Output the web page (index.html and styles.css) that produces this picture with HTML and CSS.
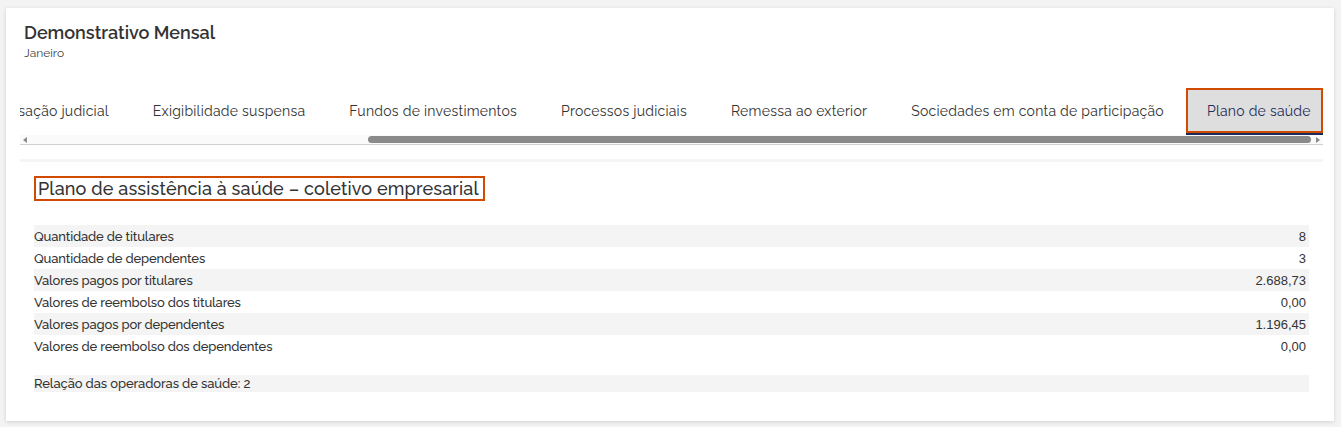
FILE: index.html
```html
<!DOCTYPE html>
<html lang="pt-BR">
<head>
<meta charset="utf-8">
<title>Demonstrativo Mensal</title>
<link rel="stylesheet" href="styles.css">
</head>
<body>
<div class="card">
  <header class="head">
    <h1 class="title">Demonstrativo Mensal</h1>
    <div class="subtitle">Janeiro</div>
  </header>

  <nav class="tabs">
    <div class="tabs-viewport">
      <ul class="tab-strip">
        <li class="tab">Compensação judicial</li>
        <li class="tab">Exigibilidade suspensa</li>
        <li class="tab">Fundos de investimentos</li>
        <li class="tab">Processos judiciais</li>
        <li class="tab">Remessa ao exterior</li>
        <li class="tab">Sociedades em conta de participação</li>
        <li class="tab tab-active">Plano de saúde</li>
      </ul>
    </div>
    <div class="scrollbar">
      <span class="arrow arrow-left"></span>
      <div class="track"><div class="thumb"></div></div>
      <span class="arrow arrow-right"></span>
    </div>
  </nav>

  <section class="panel">
    <h2 class="panel-title">Plano de assistência à saúde – coletivo empresarial</h2>
    <div class="rows">
      <div class="row"><span class="label">Quantidade de titulares</span><span class="value">8</span></div>
      <div class="row"><span class="label">Quantidade de dependentes</span><span class="value">3</span></div>
      <div class="row"><span class="label">Valores pagos por titulares</span><span class="value">2.688,73</span></div>
      <div class="row"><span class="label">Valores de reembolso dos titulares</span><span class="value">0,00</span></div>
      <div class="row"><span class="label">Valores pagos por dependentes</span><span class="value">1.196,45</span></div>
      <div class="row"><span class="label">Valores de reembolso dos dependentes</span><span class="value">0,00</span></div>
    </div>
    <div class="relation">Relação das operadoras de saúde: 2</div>
  </section>
</div>
</body>
</html>
```

FILE: styles.css
```css
* { box-sizing: border-box; }

html, body {
  margin: 0;
  padding: 0;
}

body {
  background: #f3f3f3;
  padding: 8px 7px 6px 6px;
  font-family: "Raleway", "Lato", "Open Sans", sans-serif;
  color: #333;
}

.card {
  background: #fff;
  box-shadow: 0 1px 4px rgba(0, 0, 0, 0.14);
  padding: 13px 11px 28px 14px;
  height: 413px;
}

.head {
  padding-left: 4px;
}

.title {
  margin: 0;
  font-size: 18px;
  line-height: 24px;
  font-weight: 600;
  color: #333;
}

.subtitle {
  font-size: 12px;
  line-height: 16px;
  color: #444;
}

.tabs {
  margin-top: 27px;
  border-bottom: 1px solid #cfcfcf;
}

.tabs-viewport {
  overflow: hidden;
}

.tab-strip {
  list-style: none;
  margin: 0 0 0 -81px;
  padding: 0;
  display: flex;
  white-space: nowrap;
}

.tab {
  flex: none;
  height: 47px;
  padding: 1px 22px 0;
  font-size: 14px;
  line-height: 45px;
  letter-spacing: 0.25px;
  color: #333;
}

.tab-active {
  background: #dedede;
  border: 2px solid #d04a02;
  padding: 1px 10px 0 19px;
  line-height: 40px;
  height: 45px;
  margin-bottom: 2px;
  position: relative;
  color: #1e2d5a;
}

.tab-active::after {
  content: "";
  position: absolute;
  left: -2px;
  right: -2px;
  bottom: -4px;
  height: 2px;
  background: #1b2a5c;
}

.scrollbar {
  display: flex;
  align-items: center;
  height: 9px;
  background: #fafafa;
}

.arrow {
  flex: none;
  width: 0;
  height: 0;
  border-top: 3px solid transparent;
  border-bottom: 3px solid transparent;
}

.arrow-left {
  margin: 0 4px 0 3px;
  border-right: 4px solid #8a8a8a;
}

.arrow-right {
  margin: 0 3px 0 5px;
  border-left: 4px solid #8a8a8a;
}

.track {
  flex: 1;
  height: 7px;
  padding-left: 337px;
}

.thumb {
  height: 7px;
  border-radius: 4px;
  background: #8a8a8a;
}

.panel {
  margin-top: 14px;
  border-top: 3px solid #f5f5f5;
  padding: 14px 14px 0;
}

.panel-title {
  display: inline-block;
  margin: 0;
  border: 2px solid #d04a02;
  padding: 0 4px 0 2px;
  font-size: 18px;
  line-height: 21px;
  font-weight: 500;
  letter-spacing: 0.16px;
  color: #333;
}

.rows {
  margin-top: 24px;
}

.row {
  display: flex;
  justify-content: space-between;
  height: 22px;
  align-items: center;
  padding-right: 3px;
  font-size: 13px;
}

.row:nth-child(odd) {
  background: #f4f4f4;
}

.label {
  font-weight: 500;
  letter-spacing: -0.15px;
  color: #333;
}

.value {
  font-family: "Liberation Sans", Arial, sans-serif;
  font-size: 13px;
  color: #333;
}

.relation {
  margin-top: 18px;
  height: 17px;
  line-height: 17px;
  background: #f4f4f4;
  font-size: 13px;
  font-weight: 500;
  letter-spacing: -0.1px;
}
```
